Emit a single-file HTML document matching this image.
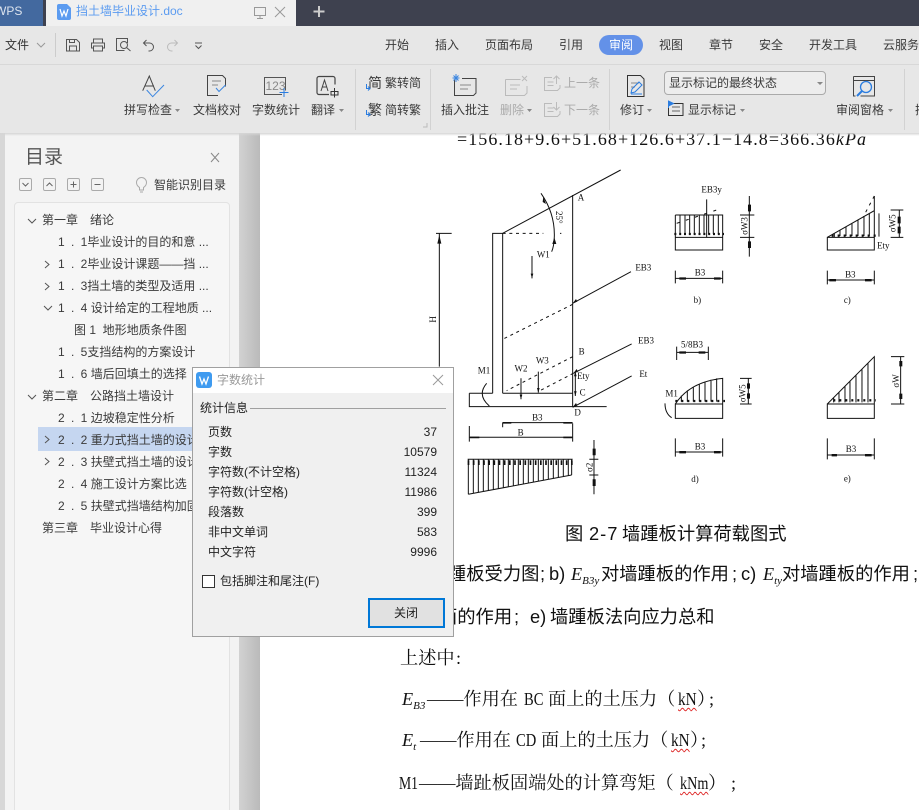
<!DOCTYPE html>
<html lang="zh"><head><meta charset="utf-8"><title>挡土墙毕业设计.doc</title>
<style>
html,body{margin:0;padding:0;background:#fff}
#p{position:relative;width:919px;height:810px;overflow:hidden;background:#fff;font-family:"Liberation Sans","Noto Sans CJK SC",sans-serif;font-size:12px;color:#333}
#p div{position:absolute}
.t{line-height:20px;height:20px;white-space:pre;color:#3a3a3a}
.g{color:#aaa}
svg{position:absolute;left:0;top:0}
.d{font-family:"Liberation Serif","Noto Serif CJK SC",serif;font-size:18.2px;line-height:28px;height:28px;white-space:pre;color:#111}
.s{font-family:"Liberation Sans","Noto Sans CJK SC",sans-serif;font-size:18.3px}
.i{font-family:"Liberation Serif",serif;font-style:italic}
sub{font-size:11px;font-style:italic;font-family:"Liberation Serif",serif;line-height:0;vertical-align:-4px}
.w{text-decoration:underline wavy #d22;text-decoration-thickness:1px;text-underline-offset:2px}
.x{transform-origin:0 50%}
.r{word-spacing:3px}
</style></head><body><div id="p">

<!-- document -->
<svg width="919" height="810" viewBox="0 0 919 810">
<text x="457" y="145" textLength="409" lengthAdjust="spacing" font-family="Liberation Serif,serif" font-size="18" fill="#111">=156.18+9.6+51.68+126.6+37.1−14.8=366.36<tspan font-style="italic">kPa</tspan></text>

<g transform="translate(430 160) scale(.3333)" fill="none" stroke="#111" stroke-width="3">
<path d="M218 220L572 30M428 105V740M188 700V220H218V700M118 700V740H428M118 700H188M218 700H428M428 740H530"/>
<path d="M218 220H340M390 220h4M428 433L218 538M428 590L230 692M430 640L330 692" stroke-dasharray="9 11"/>
<path d="M18 220H65M28 220V620M333 100Q375 160 373 230Q372 260 365 275M306 288V355M273 655V718M325 635V698M436 635V708"/>
<path d="M603 335L428 430M605 552L430 640M605 648L428 742M170 670Q140 705 178 738"/>
<path d="M218 788H428M218 788v14M118 832H428M118 798V845M428 790V845"/>
<path d="M113 898H428M115 1003L425 945M115 898V1003M130 898V1000M145 898V997M160 898V995M175 898V992M190 898V989M205 898V986M220 898V983M235 898V981M250 898V978M265 898V975M280 898V972M295 898V969M310 898V967M325 898V964M340 898V961M355 898V958M370 898V955M385 898V953M400 898V950M415 898V947M425 898V945"/>
<path d="M492 840V1003M478 898H505M478 945H505"/>
<path d="M113 908H432" stroke-width="14" stroke-dasharray="5 10.5"/>
<g fill="#111" stroke="none">
<path d="M28 225l-6 26h12zM340 110l8 22-10-6zM373 232l-6 20h12zM306 355l-4-14h8zM273 718l-4-14h8zM325 698l-4-14h8zM436 708l-4-14h8zM436 635l-4 14h8zM428 430l14-5-4-8zM430 640l14-5-4-8zM428 742l14-5-4-8z"/>
<path d="M218 786h26v5h-26zM400 786h26v5h-26zM120 830h28v5h-28zM400 830h26v5h-26zM488 866h9v20h-9zM488 958h9v20h-9z"/>
</g>
<g fill="#111" stroke="none" font-family="Liberation Serif,serif" font-size="27" text-anchor="middle">
<text x="340" y="292">W1</text><text x="453" y="122">A</text><text x="640" y="331">EB3</text><text x="455" y="584">B</text><text x="648" y="551">EB3</text>
<text x="460" y="657">Ety</text><text x="458" y="707">C</text><text x="640" y="651">Et</text><text x="443" y="767">D</text><text x="337" y="611">W3</text><text x="273" y="634">W2</text><text x="162" y="641">M1</text>
<text x="322" y="781">B3</text><text x="272" y="827">B</text>
<text transform="translate(18 478) rotate(-90)">H</text><text transform="translate(378 172) rotate(90)">25°</text><text transform="translate(487 922) rotate(-90)">σ2</text>
</g></g>

<g transform="translate(660 170) scale(.3333)" fill="none" stroke="#111" stroke-width="3">
<path d="M46 202H188V240H46ZM46 135H188V202M46 135V202M60 135V192M75 135V192M89 135V192M103 135V192M118 135V192M132 135V192M146 135V192M160 135V192M175 135V192M140 88V202"/>
<path d="M50 160L185 115" stroke-dasharray="9 20"/>
<path d="M43 192H192" stroke-width="7" stroke-dasharray="6 8.5"/>
<path d="M268 78V260M240 135H283M240 202H283M46 325H188M46 302V340M188 302V340"/>
<path d="M502 202H643V240H502ZM502 202L643 122V202M643 122V78M523 190V202M540 180V198M558 170V198M576 160V198M594 150V198M612 140V198M628 130V198M657 130V200M718 120V202M692 120H730M692 202H730M502 330H643M502 302V343M643 302V343"/>
<path d="M643 78L610 140" stroke-dasharray="9 14"/>
<path d="M515 197H648" stroke-width="7" stroke-dasharray="6 12"/>
<g fill="#111" stroke="none"><path d="M264 104h9v20h-9zM264 214h9v20h-9zM713 140h9v20h-9zM713 170h9v20h-9zM58 322h20v7h-20zM162 322h20v7h-20zM508 327h20v7h-20zM615 327h20v7h-20z"/></g>
<g fill="#111" stroke="none" font-family="Liberation Serif,serif" font-size="27" text-anchor="middle">
<text x="155" y="68">EB3y</text><text x="120" y="317">B3</text><text x="112" y="399">b)</text><text x="670" y="235">Ety</text><text x="571" y="322">B3</text><text x="562" y="399">c)</text>
<text transform="translate(262 168) rotate(-90)">σW3</text><text transform="translate(707 160) rotate(-90)">σW5</text>
</g></g>

<g transform="translate(660 325) scale(.3333)" fill="none" stroke="#111" stroke-width="3">
<path d="M50 82H145M50 65V105M145 65V105"/>
<path d="M46 237H188V280H46ZM46 237Q90 170 188 160V237M64 212V230M82 196V230M100 186V230M118 178V230M135 170V230M153 164V230M170 160V230"/>
<path d="M46 228H195" stroke-width="7" stroke-dasharray="6 12"/>
<path d="M15 235Q15 265 35 278M265 160V237M240 160H275M240 237H275M46 381H188M46 340V395M188 340V395"/>
<path d="M502 237H643V280H502ZM502 237L643 95V237M521 218V232M537 202V232M555 184V232M570 168V232M588 150V232M606 132V232M624 114V232"/>
<path d="M520 226H648" stroke-width="7" stroke-dasharray="6 12"/>
<path d="M722 95V237M693 95H733M693 237H733M502 390H643M502 340V403M643 340V403"/>
<g fill="#111" stroke="none"><path d="M58 79h20v7h-20zM116 79h20v7h-20zM58 378h20v7h-20zM162 378h20v7h-20zM261 175h9v16h-9zM261 205h9v16h-9zM718 108h9v16h-9zM718 206h9v16h-9zM515 387h16v7h-16zM615 387h20v7h-20z"/></g>
<g fill="#111" stroke="none" font-family="Liberation Serif,serif" font-size="27" text-anchor="middle">
<text x="96" y="67">5/8B3</text><text x="35" y="214">M1</text><text x="120" y="374">B3</text><text x="105" y="471">d)</text><text x="573" y="381">B3</text><text x="562" y="469">e)</text>
<text transform="translate(257 205) rotate(-90)">σW5</text><text transform="translate(717 168) rotate(-90)">σW</text>
</g></g>
</svg>

<div class="d s" style="left:565px;top:520px">图</div>
<div class="d s" style="left:589px;top:520px;letter-spacing:1px">2-7</div>
<div class="d s" style="left:622px;top:520px">墙踵板计算荷载图式</div>

<div class="d s" style="left:448px;top:560px">踵板受力图</div>
<div class="d s" style="left:540px;top:560px">;</div>
<div class="d s" style="left:549px;top:560px">b)</div>
<div class="d i" style="left:571px;top:560px">E<sub>B3y</sub></div>
<div class="d s" style="left:601px;top:560px">对墙踵板的作用</div>
<div class="d s" style="left:732px;top:560px">;</div>
<div class="d s" style="left:741px;top:560px">c)</div>
<div class="d i" style="left:763px;top:560px">E<sub>ty</sub></div>
<div class="d s" style="left:782px;top:560px">对墙踵板的作用</div>
<div class="d s" style="left:913px;top:560px">;</div>

<div class="d s" style="left:439px;top:603px">面的作用</div>
<div class="d s" style="left:514px;top:603px">;</div>
<div class="d s" style="left:530px;top:603px">e)</div>
<div class="d s" style="left:550px;top:603px">墙踵板法向应力总和</div>

<div class="d" style="left:400px;top:644px">上述中</div>
<div class="d" style="left:456px;top:644px">:</div>

<div class="d i" style="left:402px;top:685px">E<sub>B3</sub></div>
<div class="d" style="left:427px;top:685px">——作用在</div>
<div class="d x" style="left:524px;top:685px;transform:scaleX(.8)">BC</div>
<div class="d" style="left:548px;top:685px">面上的土压力（</div>
<div class="d x" style="left:678px;top:685px;transform:scaleX(.84)"><span class="w">kN</span></div>
<div class="d" style="left:697px;top:685px">）</div>
<div class="d" style="left:709px;top:685px">;</div>

<div class="d i" style="left:402px;top:726px">E<sub>t</sub></div>
<div class="d" style="left:420px;top:726px">——作用在</div>
<div class="d x" style="left:516px;top:726px;transform:scaleX(.8)">CD</div>
<div class="d" style="left:541px;top:726px">面上的土压力（</div>
<div class="d x" style="left:671px;top:726px;transform:scaleX(.84)"><span class="w">kN</span></div>
<div class="d" style="left:690px;top:726px">）</div>
<div class="d" style="left:701px;top:726px">;</div>

<div class="d x" style="left:399px;top:769px;transform:scaleX(.75)">M1</div>
<div class="d" style="left:419px;top:769px">——墙趾板固端处的计算弯矩（</div>
<div class="d x" style="left:680px;top:769px;transform:scaleX(.78)"><span class="w">kNm</span></div>
<div class="d" style="left:708px;top:769px">）</div>
<div class="d" style="left:731px;top:769px">;</div>

<!-- sidebar -->
<div style="left:0;top:133px;width:5px;height:677px;background:#d7d7d7"></div>
<div style="left:5px;top:133px;width:234px;height:677px;background:#f3f3f3"></div>
<div style="left:239px;top:133px;width:21px;height:677px;background:linear-gradient(90deg,#d2d2d2,#bababa)"></div>
<div style="left:14px;top:202px;width:214px;height:620px;background:#f6f6f6;border:1px solid #e2e2e2;border-radius:4px;box-sizing:content-box"></div>
<div style="left:38px;top:427px;width:170px;height:24px;background:#c5d6f0"></div>
<div class="t" style="left:25px;top:147px;font-size:19px;line-height:22px;height:22px;color:#555">目录</div>
<div class="t" style="left:154px;top:175px">智能识别目录</div>

<div class="t" style="left:42px;top:210px">第一章<span style="margin-left:12px">绪论</span></div>
<div class="t" style="left:58px;top:232px"><span class="r">1 . 1</span>毕业设计的目的和意 ...</div>
<div class="t" style="left:58px;top:254px"><span class="r">1 . 2</span>毕业设计课题——挡 ...</div>
<div class="t" style="left:58px;top:276px"><span class="r">1 . 3</span>挡土墙的类型及适用 ...</div>
<div class="t" style="left:58px;top:298px"><span class="r">1 . 4</span> 设计给定的工程地质 ...</div>
<div class="t" style="left:74px;top:320px">图 1  地形地质条件图</div>
<div class="t" style="left:58px;top:342px"><span class="r">1 . 5</span>支挡结构的方案设计</div>
<div class="t" style="left:58px;top:364px"><span class="r">1 . 6</span> 墙后回填土的选择</div>
<div class="t" style="left:42px;top:386px">第二章<span style="margin-left:12px">公路挡土墙设计</span></div>
<div class="t" style="left:58px;top:408px"><span class="r">2 . 1</span> 边坡稳定性分析</div>
<div class="t" style="left:58px;top:430px"><span class="r">2 . 2</span> 重力式挡土墙的设计</div>
<div class="t" style="left:58px;top:452px"><span class="r">2 . 3</span> 扶壁式挡土墙的设计</div>
<div class="t" style="left:58px;top:474px"><span class="r">2 . 4</span> 施工设计方案比选</div>
<div class="t" style="left:58px;top:496px"><span class="r">2 . 5</span> 扶壁式挡墙结构加固</div>
<div class="t" style="left:42px;top:518px">第三章<span style="margin-left:12px">毕业设计心得</span></div>

<svg width="919" height="810" viewBox="0 0 919 810" fill="none" stroke="#666" stroke-width="1">
<path d="M211 153l8 9M219 153l-8 9" stroke="#888"/>
<rect x="19.500" y="178.500" width="12" height="12" rx="1.500" stroke="#aaa"/><rect x="43.500" y="178.500" width="12" height="12" rx="1.500" stroke="#aaa"/><rect x="67.500" y="178.500" width="12" height="12" rx="1.500" stroke="#aaa"/><rect x="91.500" y="178.500" width="12" height="12" rx="1.500" stroke="#aaa"/>
<path d="M22.500 183l3 3 3-3M46.500 186l3-3 3 3M70.500 184.500h6M73.500 181.500v6M94.500 184.500h6"/>
<path d="M139.500 190v-2.500c-1.500-1-3-2.300-3-5a5 5 0 0 1 10 0c0 2.700-1.500 4-3 5v2.500zM140 192h3" stroke="#aaa"/>
<path d="M28 219l4 4 4-4M45 261l4 3.500-4 3.500M45 283l4 3.500-4 3.500M44 306l4 4 4-4M28 395l4 4 4-4M45 436l4 3.500-4 3.500M45 458l4 3.500-4 3.500" stroke="#555"/>
</svg>

<!-- top bars -->
<div style="left:0;top:0;width:919px;height:26px;background:#3e414f"></div>
<div style="left:0;top:0;width:43px;height:26px;background:#43699f"></div>
<div class="t" style="left:-5px;top:1px;color:#dde4ee">WPS</div>
<div style="left:46px;top:0;width:250px;height:26px;background:#f0f0f0"></div>
<div class="t" style="left:76px;top:1px;color:#5b9bf0">挡土墙毕业设计.doc</div>
<div style="left:0;top:26px;width:919px;height:107px;background:#e7e7e7"></div>
<div style="left:0;top:64px;width:919px;height:1px;background:#d8d8d8"></div>
<div style="left:0;top:133px;width:919px;height:3px;background:linear-gradient(#d5d5d5,rgba(255,255,255,0))"></div>

<div class="t" style="left:5px;top:35px;color:#333">文件</div>
<div class="t" style="left:385px;top:35px">开始</div>
<div class="t" style="left:435px;top:35px">插入</div>
<div class="t" style="left:485px;top:35px">页面布局</div>
<div class="t" style="left:559px;top:35px">引用</div>
<div style="left:599px;top:35px;width:44px;height:20px;border-radius:10px;background:#6391e8"></div>
<div class="t" style="left:609px;top:35px;color:#fff">审阅</div>
<div class="t" style="left:659px;top:35px">视图</div>
<div class="t" style="left:709px;top:35px">章节</div>
<div class="t" style="left:759px;top:35px">安全</div>
<div class="t" style="left:809px;top:35px">开发工具</div>
<div class="t" style="left:883px;top:35px">云服务</div>

<div class="t" style="left:124px;top:100px">拼写检查</div>
<div class="t" style="left:193px;top:100px">文档校对</div>
<div class="t" style="left:252px;top:100px">字数统计</div>
<div class="t" style="left:311px;top:100px">翻译</div>
<div class="t" style="left:385px;top:73px">繁转简</div>
<div class="t" style="left:385px;top:100px">简转繁</div>
<div class="t" style="left:368px;top:73px;font-size:14px">简</div>
<div class="t" style="left:368px;top:100px;font-size:14px">繁</div>
<div class="t" style="left:441px;top:100px">插入批注</div>
<div class="t g" style="left:500px;top:100px">删除</div>
<div class="t g" style="left:564px;top:73px">上一条</div>
<div class="t g" style="left:564px;top:100px">下一条</div>
<div class="t" style="left:620px;top:100px">修订</div>
<div style="left:664px;top:71px;width:160px;height:22px;border:1px solid #aaa;border-radius:4px;background:#ededed"></div>
<div class="t" style="left:669px;top:73px">显示标记的最终状态</div>
<div class="t" style="left:688px;top:100px">显示标记</div>
<div class="t" style="left:836px;top:100px">审阅窗格</div>
<div class="t" style="left:915px;top:100px">插</div>
<div class="t" style="left:264px;top:76px;width:23px;text-align:center;color:#888;font-size:12px">123</div>

<svg width="919" height="810" viewBox="0 0 919 810" fill="none" stroke="#555" stroke-width="1">
<!-- tab icons -->
<path d="M59 4h8l4 4v10a2 2 0 0 1-2 2H59a2 2 0 0 1-2-2V6a2 2 0 0 1 2-2z" fill="#5b9bf0" stroke="none"/>
<path d="M60 9l2 7 2-5 2 5 2-7" stroke="#fff" stroke-width="1.200"/>
<path d="M254.500 7.500h11v8h-11zM260 15.500v3M257 18.500h6M275 7l10 10M285 7l-10 10" stroke="#999"/>
<path d="M319 6v11M313.500 11.500h11" stroke="#ccc" stroke-width="2"/>
<!-- quick access -->
<path d="M37 43l4 4 4-4" stroke="#999"/><path d="M55.500 33v24" stroke="#ccc"/>
<path d="M66.500 39.500h10l3 3v8.500h-13zM69.500 51v-5h7v5M69.500 39.500v3h5v-3"/>
<path d="M93.500 43v-4h9v4M93.500 48h-2v-5h13v5h-2M93.500 46h9v5h-9z"/>
<path d="M127.500 43v-4.500h-11v12h8"/><circle cx="124" cy="45" r="3.500"/><path d="M126.500 47.500l4 3.500"/>
<path d="M146.500 40l-3 3 3 3M143.500 43h6a4 4 0 0 1 0 8h-1"/>
<path d="M174.500 40l3 3-3 3M177.500 43h-6a4 4 0 0 0 0 8h1" stroke="#bbb"/>
<path d="M195 43h7M195.500 45.500l3 3 3-3"/>
<!-- separators -->
<path d="M355.500 69v61M430.500 69v61M609.500 69v61M904.500 69v61" stroke="#d2d2d2"/>
<path d="M423 127h4v-4" stroke="#bbb"/>
<!-- dropdown arrows -->
<g fill="#888" stroke="none"><path d="M175 109h5l-2.500 3zM339 109h5l-2.500 3zM527 109h5l-2.500 3zM647 109h5l-2.500 3zM740 109h5l-2.500 3zM888 109h5l-2.500 3zM817 82h6l-3 3z"/></g>
<!-- spelling -->
<path d="M142.700 90.700L149.300 76l6 14.700M145 86h9" stroke="#444"/>
<path d="M146.700 90l6 6.700L164 85" stroke="#3b86e0"/>
<!-- proof -->
<path d="M218 95.500h-10.500v-20h15l3 3v8" stroke="#444"/><path d="M212 81h9M212 85h6" stroke="#888"/>
<path d="M216 88l3 3.500 6.500-6.500" stroke="#3b86e0"/>
<!-- count -->
<path d="M282 94.500h-17.500v-17h21v13" stroke="#555"/><path d="M284 88v9M279.500 92.500h9" stroke="#2b7de0"/>
<!-- translate -->
<path d="M329 94.500h-10a2 2 0 0 1-2-2v-14a2 2 0 0 1 2-2h14a2 2 0 0 1 2 2v6" stroke="#444" stroke-width="1.200"/>
<path d="M321 91l3.500-11 3.500 11M322 87h5" stroke="#444"/>
<path d="M331 91.500h7v3.500h-7zM334.500 88v9.500" stroke="#333"/>
<!-- conv arrows -->
<path d="M366.500 84v4.500h3M368 86.500l2 2-2 2M366.500 110v4.500h3M368 112.500l2 2-2 2" stroke="#2b7de0"/>
<!-- comment -->
<path d="M454.500 80v15.500h19l2.500-2.500v-14.500h-14" stroke="#444"/><path d="M460 85h11M460 89h8" stroke="#888"/>
<path d="M456 74v8M452.500 78h7M453.500 75.500l5 5M458.500 75.500l-5 5" stroke="#3b86e0"/>
<!-- delete -->
<path d="M505.500 79.500h15M505.500 79.500v16h19l2.500-2.500v-7" stroke="#bbb"/><path d="M510 85h10M510 89h7M522 76l5 5M527 76l-5 5" stroke="#bbb"/>
<!-- prev / next -->
<path d="M552 77.500h-7.500v13h13l2.500-2.500v-3M547.500 82h6M547.500 85.500h6M556.500 84v-8M553.500 79l3-3 3 3" stroke="#bbb"/>
<path d="M552 103.500h-7.500v13h13l2.500-2.500v-3M547.500 108h6M547.500 111.500h6M556.500 102v8M553.500 107l3 3 3-3" stroke="#bbb"/>
<!-- revise -->
<path d="M627.500 75.500h13l3.500 3.500v17.500h-16.500z" stroke="#333"/><path d="M631 83h8M631 87h4" stroke="#888"/>
<path d="M631 93l1-4 7-7 3 3-7 7zM631 94h11" stroke="#2b7de0"/>
<!-- show markup -->
<path d="M668.500 104v11.500h14.500v-12h-10" stroke="#333"/><path d="M672 107h8M672 111h8" stroke="#666"/>
<path d="M668.500 108v-7l5 2.500-5 2.500z" fill="#2b7de0" stroke="#2b7de0"/>
<!-- review pane -->
<path d="M853.500 76.500h21v19.500h-14M853.500 76.500v19.500h2M853.500 80.500h21" stroke="#444"/>
<circle cx="866" cy="87" r="5.500" stroke="#2b7de0" stroke-width="1.300"/><path d="M862 91l-5 5" stroke="#2b7de0" stroke-width="2"/>
</svg>

<!-- dialog -->
<div style="left:192px;top:367px;width:260px;height:268px;background:#f0f0f0;border:1px solid #a0a0a0"></div>
<div style="left:193px;top:368px;width:260px;height:25px;background:#fff"></div>
<div style="left:196px;top:372px;width:16px;height:16px;border-radius:3px;background:#3f9bf0"></div>
<div class="t" style="left:217px;top:370px;color:#999">字数统计</div>
<div class="t" style="left:200px;top:398px;color:#222">统计信息</div>
<div style="left:250px;top:408px;width:196px;height:1px;background:#a0a0a0"></div>
<div class="t" style="left:208px;top:422px;color:#222">页数</div><div class="t" style="left:377px;top:422px;width:60px;text-align:right;color:#222">37</div>
<div class="t" style="left:208px;top:442px;color:#222">字数</div><div class="t" style="left:377px;top:442px;width:60px;text-align:right;color:#222">10579</div>
<div class="t" style="left:208px;top:462px;color:#222">字符数(不计空格)</div><div class="t" style="left:377px;top:462px;width:60px;text-align:right;color:#222">11324</div>
<div class="t" style="left:208px;top:482px;color:#222">字符数(计空格)</div><div class="t" style="left:377px;top:482px;width:60px;text-align:right;color:#222">11986</div>
<div class="t" style="left:208px;top:502px;color:#222">段落数</div><div class="t" style="left:377px;top:502px;width:60px;text-align:right;color:#222">399</div>
<div class="t" style="left:208px;top:522px;color:#222">非中文单词</div><div class="t" style="left:377px;top:522px;width:60px;text-align:right;color:#222">583</div>
<div class="t" style="left:208px;top:542px;color:#222">中文字符</div><div class="t" style="left:377px;top:542px;width:60px;text-align:right;color:#222">9996</div>
<div style="left:202px;top:575px;width:11px;height:11px;border:1px solid #333;background:#fff"></div>
<div class="t" style="left:220px;top:571px;color:#222">包括脚注和尾注(F)</div>
<div style="left:368px;top:598px;width:73px;height:26px;border:2px solid #0078d7;background:#e1e1e1"></div>
<div class="t" style="left:394px;top:603px;color:#222">关闭</div>
<svg width="919" height="810" viewBox="0 0 919 810" fill="none">
<path d="M199.500 376.500l2.500 7.500 2-5 2 5 2.500-7.500" stroke="#fff" stroke-width="1.300"/>
<path d="M433 375l10 10M443 375l-10 10" stroke="#999"/>
</svg>
</div></body></html>
